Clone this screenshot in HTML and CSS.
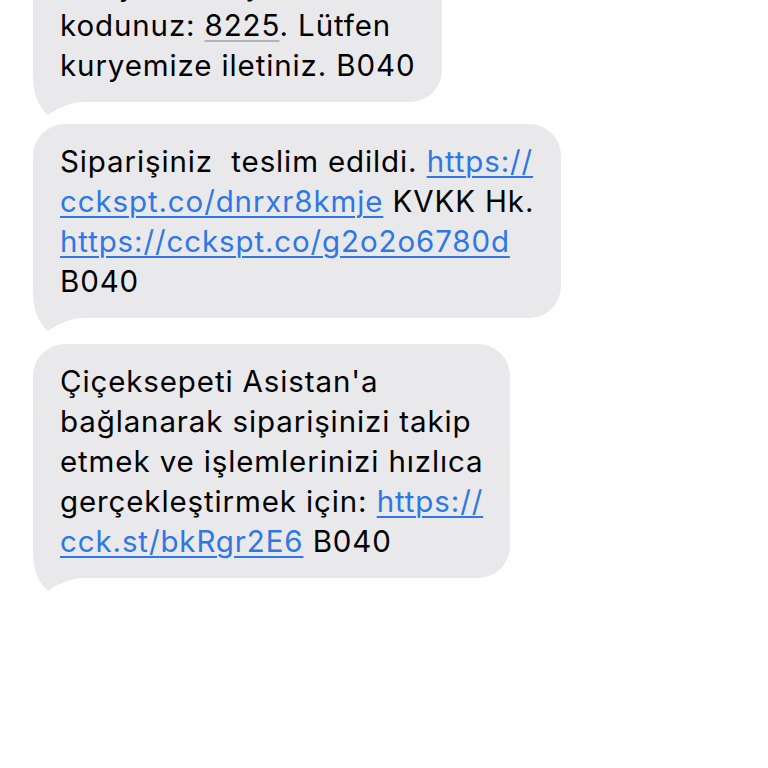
FILE: index.html
```html
<!DOCTYPE html>
<html lang="tr">
<head>
<meta charset="utf-8">
<title>Mesajlar</title>
<link rel="stylesheet" href="styles.css">
</head>
<body>
<main class="thread">
  <div class="msg msg--first">
    <p class="msg__text">Onaylamak için teslimat<br>kodunuz: <span class="data">8225</span>. Lütfen<br>kuryemize iletiniz. B040</p>
    <svg class="msg__tail" viewBox="0 0 50 46" width="50" height="46" aria-hidden="true"><path d="M0 0 L0 6 C0 24 5 36 15 45 C24 39 34 33 50 32 L50 0 Z"/></svg>
  </div>
  <div class="msg">
    <p class="msg__text">Siparişiniz&nbsp; teslim edildi. <a class="link" href="#">https://<br>cckspt.co/dnrxr8kmje</a> KVKK Hk.<br><a class="link" href="#">https://cckspt.co/g2o2o6780d</a><br>B040</p>
    <svg class="msg__tail" viewBox="0 0 50 46" width="50" height="46" aria-hidden="true"><path d="M0 0 L0 6 C0 24 5 36 15 45 C24 39 34 33 50 32 L50 0 Z"/></svg>
  </div>
  <div class="msg msg--late">
    <p class="msg__text">Çiçeksepeti Asistan'a<br>bağlanarak siparişinizi takip<br>etmek ve işlemlerinizi hızlıca<br>gerçekleştirmek için: <a class="link" href="#">https://<br>cck.st/bkRgr2E6</a> B040</p>
    <svg class="msg__tail" viewBox="0 0 50 46" width="50" height="46" aria-hidden="true"><path d="M0 0 L0 6 C0 24 5 36 15 45 C24 39 34 33 50 32 L50 0 Z"/></svg>
  </div>
</main>
</body>
</html>
```
FILE: styles.css
```css
html, body {
  margin: 0;
  padding: 0;
  background: #ffffff;
}

body {
  width: 768px;
  height: 768px;
  overflow: hidden;
  font-family: Inter, "Noto Sans", "Liberation Sans", sans-serif;
}

.thread {
  display: flex;
  flex-direction: column;
  align-items: flex-start;
  gap: 22px;
  margin-top: -52px;
  padding-left: 33px;
}

.msg {
  position: relative;
  background: #e9e9eb;
  border-radius: 32px;
  padding: 17px 27px;
}

.msg--late {
  margin-top: 4px;
}

.msg__text {
  position: relative;
  z-index: 1;
  margin: 0;
  font-size: 29.5px;
  line-height: 40px;
  color: #000000;
  white-space: nowrap;
  letter-spacing: 0.88px;
}

.data {
  text-decoration: underline;
  text-decoration-color: #b4b4b8;
  text-decoration-thickness: 2px;
  text-underline-offset: 4px;
}

.link {
  color: #2f76e6;
  text-decoration: underline;
  text-decoration-thickness: 2px;
  text-underline-offset: 4px;
}

.msg__tail {
  position: absolute;
  z-index: 0;
  left: 0;
  bottom: -14px;
  fill: #e9e9eb;
}
```
